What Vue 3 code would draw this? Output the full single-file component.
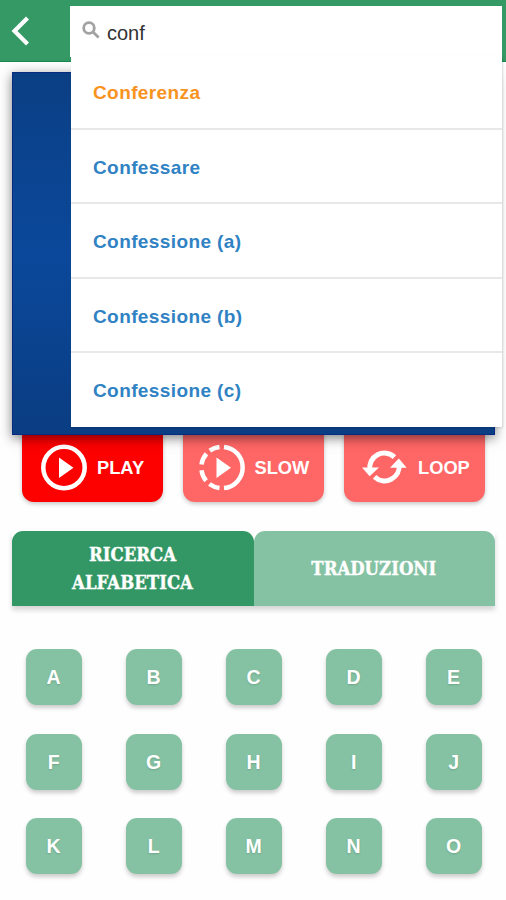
<script setup>
import { ref } from 'vue'

const query = ref('conf')
const results = ['Conferenza', 'Confessare', 'Confessione (a)', 'Confessione (b)', 'Confessione (c)']
const letters = 'ABCDEFGHIJKLMNO'.split('')
</script>

<template>
  <div class="screen">
    <header class="bar">
      <svg class="back" viewBox="0 0 18 30"><path d="M16.500 2 3.500 15l13 13" /></svg>
      <div class="search">
        <svg class="lens" viewBox="0 0 18 18">
          <circle cx="7" cy="7" r="5.3" />
          <path d="m11 11 5.6 5.6" />
        </svg>
        <span class="query">{{ query }}</span>
        <ul class="results">
          <li v-for="(item, i) in results" :key="item" :class="{ active: i === 0 }">{{ item }}</li>
        </ul>
      </div>
    </header>

    <main>
      <section class="video"></section>
      <div class="controls">
        <div class="control playing">
          <svg viewBox="0 0 48 48">
            <circle cx="24" cy="23.500" r="20.700" />
            <path class="solid" d="M19 13.500v20.500L33.500 23.700z" />
          </svg>
          <span>PLAY</span>
        </div>
        <div class="control slow">
          <svg viewBox="0 0 48 48">
            <path d="M26 2.900a20.700 20.700 0 0 1 0 41.200" />
            <path d="M21.5 2.900a20.700 20.700 0 0 0-9.700 3.700M8.500 9.700a20.700 20.700 0 0 0-5 10.800M3.500 26.200a20.700 20.700 0 0 0 4.600 10.500M11.400 40a20.700 20.700 0 0 0 10.100 4" />
            <path class="solid" d="M18.5 13.500v20.500L33 23.700z" />
          </svg>
          <span>SLOW</span>
        </div>
        <div class="control loop">
          <svg viewBox="0 0 48 48">
            <path d="M8.900 26a14.600 14.600 0 0 1 24.500-12.900" />
            <path d="M38.100 20.500a14.600 14.600 0 0 1-24.500 12.400" />
            <path class="solid" d="M1 23.500h17L8.700 32.200zM29 23.700h16.700L37.800 14.500z" />
          </svg>
          <span>LOOP</span>
        </div>
      </div>

      <div class="tabs">
        <div class="tab selected"><span>RICERCA<br />ALFABETICA</span></div>
        <div class="tab"><span>TRADUZIONI</span></div>
      </div>

      <div class="keys">
        <div v-for="l in letters" :key="l" class="key">{{ l }}</div>
      </div>
    </main>
  </div>
</template>

<style>
body {
  margin: 0;
  background: #fefefe;
}
</style>

<style scoped>
.screen {
  height: 900px;
  overflow: hidden;
  font-family: 'Liberation Sans', Arial, sans-serif;
}
.bar {
  display: flex;
  box-sizing: border-box;
  height: 62px;
  padding: 6px 4px 5px 11px;
  background: #359965;
  border-bottom: 1px solid #168a50;
}
.back {
  width: 18px;
  height: 30px;
  margin: 10px 41px 0 0;
  fill: none;
  stroke: #fff;
  stroke-width: 4.2;
}
.search {
  position: relative;
  z-index: 2;
  display: flex;
  flex: 1;
  box-sizing: border-box;
  height: 51px;
  padding: 15px 12px 0;
  background: #fff;
}
.lens {
  width: 18px;
  height: 18px;
  fill: none;
  stroke: #a2a2a2;
  stroke-width: 2.8;
}
.query {
  margin-left: 7px;
  font-size: 20px;
  line-height: 24px;
  color: #333;
}
.results {
  position: absolute;
  top: 49px;
  left: 1px;
  right: 0;
  margin: 0;
  padding: 0;
  list-style: none;
  background: #fff;
  box-shadow: 1px 1px 2px rgba(0, 0, 0, 0.13);
}
.results li {
  box-sizing: border-box;
  height: 74.5px;
  padding-left: 22px;
  border-bottom: 2px solid #e8e8e8;
  font-size: 19px;
  font-weight: 700;
  line-height: 75px;
  letter-spacing: 0.4px;
  color: #2f82c3;
}
.results li:last-child {
  height: 73.5px;
  border-bottom: 0;
}
.results li.active {
  color: #f7931e;
}
main {
  padding: 10px 11px 0 12px;
}
.video {
  position: relative;
  z-index: 1;
  box-sizing: border-box;
  height: 363px;
  border: 1px solid #062b80;
  background: linear-gradient(#0b3f84, #0b489b 50%, #0a3d82);
  box-shadow: 0 3px 11px rgba(0, 0, 0, 0.5);
}
.controls {
  display: flex;
  justify-content: space-between;
  margin-top: -10px;
  padding: 0 10px;
}
.control {
  display: flex;
  align-items: center;
  box-sizing: border-box;
  width: 141px;
  height: 77px;
  padding: 8px 0 0 18px;
  border-radius: 12px;
  background: #ff6666;
  box-shadow: 0 2px 4px rgba(0, 0, 0, 0.22);
  color: #fff;
  font-size: 18.3px;
  font-weight: 700;
}
.control span {
  padding-top: 1px;
}
.control.playing {
  background: #fd0000;
}
.control.slow {
  padding-left: 14.5px;
}
.control.loop {
  padding-left: 17px;
}
.control svg {
  width: 48px;
  height: 48px;
  margin-right: 9px;
  fill: none;
  stroke: #fff;
  stroke-width: 4.5;
}
.control.loop svg {
  stroke-width: 5;
}
.control .solid {
  fill: #fff;
  stroke: none;
}
.tabs {
  display: flex;
  margin-top: 29px;
  box-shadow: 0 4px 5px rgba(0, 0, 0, 0.16);
}
.tab {
  display: flex;
  flex: 1;
  align-items: center;
  justify-content: center;
  height: 75px;
  border-radius: 11px 11px 0 0;
  background: #84c2a3;
  color: #fff;
  font-family: 'Roboto Slab', 'DejaVu Serif', serif;
  font-size: 18.5px;
  font-weight: 700;
  line-height: 28px;
  text-align: center;
  -webkit-text-stroke: 0.4px #fff;
}
.tab span {
  transform: scaleX(0.895);
}
.tab.selected {
  background: #329764;
}
.keys {
  display: grid;
  grid-template-columns: repeat(5, 56px);
  gap: 28.5px 44px;
  padding: 43px 0 0 13.6px;
}
.key {
  height: 56px;
  border-radius: 11px;
  background: #84c2a3;
  box-shadow: 0 3px 4px rgba(0, 0, 0, 0.2);
  color: #fff;
  font-size: 19.5px;
  font-weight: 700;
  line-height: 57px;
  text-align: center;
  text-shadow: 0 1px 2px rgba(0, 0, 0, 0.15);
}
</style>
